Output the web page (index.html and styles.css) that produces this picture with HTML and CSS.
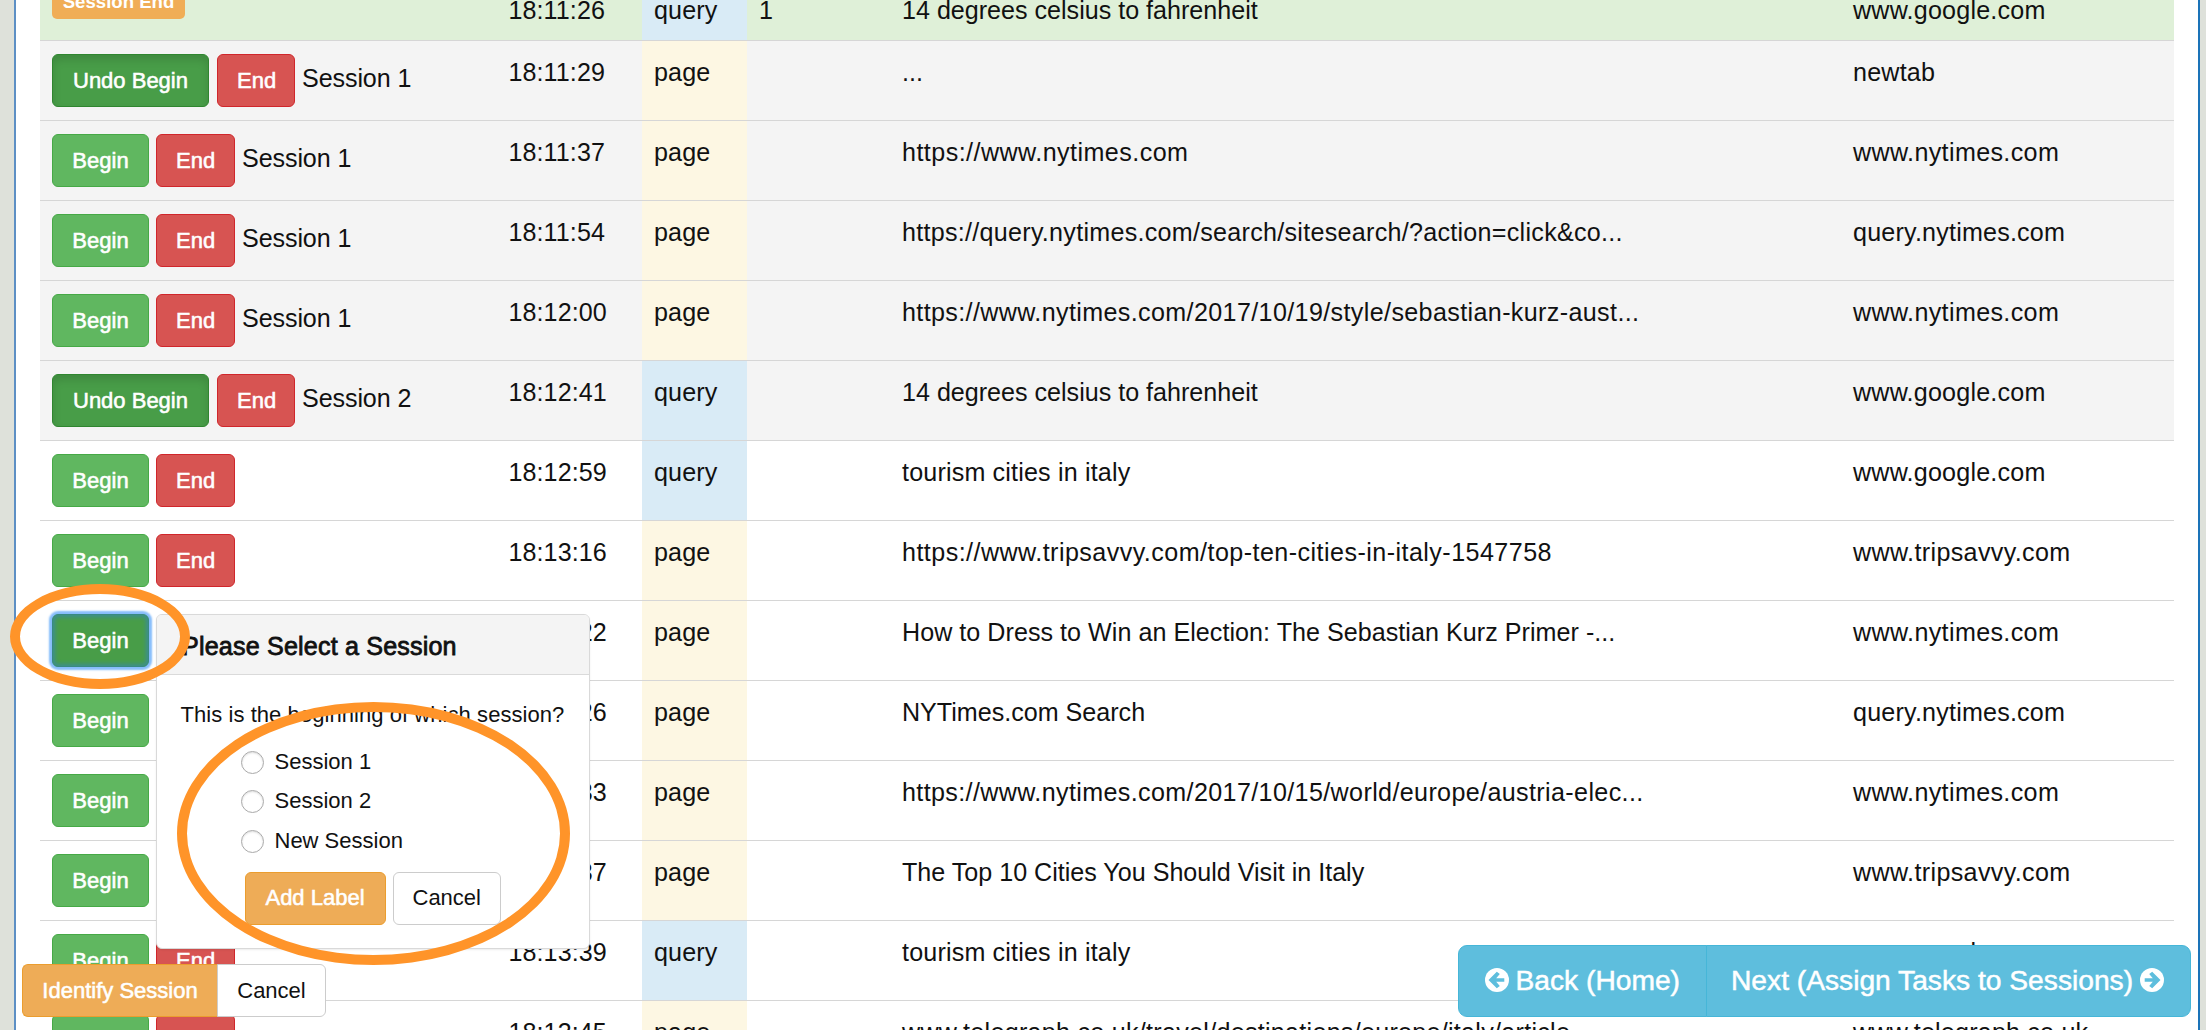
FILE: index.html
```html
<!DOCTYPE html>
<html lang="en">
<head>
<meta charset="utf-8">
<title>Identify Sessions</title>
<link rel="stylesheet" href="styles.css">
</head>
<body>
<main class="frame">
<table class="log">
<colgroup><col class="c-label"><col class="c-time"><col class="c-type"><col class="c-count"><col class="c-title"><col class="c-domain"></colgroup>
<tbody>
<tr class="done"><td class="label-cell"><span class="tag">Session End</span></td><td class="time">18:11:26</td><td class="query">query</td><td>1</td><td>14 degrees celsius to fahrenheit</td><td class="domain">www.google.com</td></tr>
<tr class="labeled"><td class="actions"><div class="row wide"><button class="btn green pressed">Undo Begin</button><button class="btn red">End</button><span>Session 1</span></div></td><td class="time">18:11:29</td><td class="page">page</td><td></td><td>...</td><td class="domain">newtab</td></tr>
<tr class="labeled"><td class="actions"><div class="row"><button class="btn green">Begin</button><button class="btn red">End</button><span>Session 1</span></div></td><td class="time">18:11:37</td><td class="page">page</td><td></td><td class="url-short">https://www.nytimes.com</td><td class="domain loose">www.nytimes.com</td></tr>
<tr class="labeled"><td class="actions"><div class="row"><button class="btn green">Begin</button><button class="btn red">End</button><span>Session 1</span></div></td><td class="time">18:11:54</td><td class="page">page</td><td></td><td class="url-query">https://query.nytimes.com/search/sitesearch/?action=click&amp;co...</td><td class="domain">query.nytimes.com</td></tr>
<tr class="labeled"><td class="actions"><div class="row"><button class="btn green">Begin</button><button class="btn red">End</button><span>Session 1</span></div></td><td class="time">18:12:00</td><td class="page">page</td><td></td><td class="url">https://www.nytimes.com/2017/10/19/style/sebastian-kurz-aust...</td><td class="domain loose">www.nytimes.com</td></tr>
<tr class="labeled"><td class="actions"><div class="row wide"><button class="btn green pressed">Undo Begin</button><button class="btn red">End</button><span>Session 2</span></div></td><td class="time">18:12:41</td><td class="query">query</td><td></td><td>14 degrees celsius to fahrenheit</td><td class="domain">www.google.com</td></tr>
<tr><td class="actions"><div class="row"><button class="btn green">Begin</button><button class="btn red">End</button></div></td><td class="time">18:12:59</td><td class="query">query</td><td></td><td class="search">tourism cities in italy</td><td class="domain">www.google.com</td></tr>
<tr><td class="actions"><div class="row"><button class="btn green">Begin</button><button class="btn red">End</button></div></td><td class="time">18:13:16</td><td class="page">page</td><td></td><td class="url-short">https://www.tripsavvy.com/top-ten-cities-in-italy-1547758</td><td class="domain loose">www.tripsavvy.com</td></tr>
<tr><td class="actions"><div class="row"><button class="btn green focused">Begin</button></div></td><td class="time">18:13:22</td><td class="page">page</td><td></td><td class="headline">How to Dress to Win an Election: The Sebastian Kurz Primer -...</td><td class="domain loose">www.nytimes.com</td></tr>
<tr><td class="actions"><div class="row"><button class="btn green">Begin</button></div></td><td class="time">18:13:26</td><td class="page">page</td><td></td><td>NYTimes.com Search</td><td class="domain">query.nytimes.com</td></tr>
<tr><td class="actions"><div class="row"><button class="btn green">Begin</button></div></td><td class="time">18:13:33</td><td class="page">page</td><td></td><td class="url">https://www.nytimes.com/2017/10/15/world/europe/austria-elec...</td><td class="domain loose">www.nytimes.com</td></tr>
<tr><td class="actions"><div class="row"><button class="btn green">Begin</button></div></td><td class="time">18:13:37</td><td class="page">page</td><td></td><td>The Top 10 Cities You Should Visit in Italy</td><td class="domain loose">www.tripsavvy.com</td></tr>
<tr><td class="actions"><div class="row"><button class="btn green">Begin</button><button class="btn red">End</button></div></td><td class="time">18:13:39</td><td class="query">query</td><td></td><td class="search">tourism cities in italy</td><td class="domain">www.google.com</td></tr>
<tr><td class="actions"><div class="row"><button class="btn green">Begin</button><button class="btn red">End</button></div></td><td class="time">18:13:45</td><td class="page">page</td><td></td><td class="url-query">www.telegraph.co.uk/travel/destinations/europe/italy/article...</td><td class="domain">www.telegraph.co.uk</td></tr>
</tbody>
</table>
</main>

<section class="popover">
  <h3>Please Select a Session</h3>
  <div class="popover-body">
    <p>This is the beginning of which session?</p>
    <div class="choices">
      <label><input type="radio" name="session">Session 1</label>
      <label><input type="radio" name="session">Session 2</label>
      <label><input type="radio" name="session">New Session</label>
    </div>
    <div class="popover-actions"><button class="btn orange">Add Label</button><button class="btn plain">Cancel</button></div>
  </div>
</section>

<div class="dock dock-left"><button class="btn orange">Identify Session</button><button class="btn plain">Cancel</button></div>
<div class="dock dock-right">
  <button class="nav"><svg class="icon" viewBox="0 0 24 24"><circle cx="12" cy="12" r="12"/><path d="M3.5 12 11.8 3.8 14.8 6 11.2 10.2H19.3V13.8H11.2L14.8 18 11.8 20.2Z"/></svg><span>Back (Home)</span></button>
  <button class="nav"><span>Next (Assign Tasks to Sessions)</span><svg class="icon" viewBox="0 0 24 24"><circle cx="12" cy="12" r="12"/><path d="M20.5 12 12.2 3.8 9.2 6 12.8 10.2H4.7V13.8H12.8L9.2 18 12.2 20.2Z"/></svg></button>
</div>
<div class="ring ring-begin"></div>
<div class="ring ring-choices"></div>
</body>
</html>
```
FILE: styles.css
```css
* { box-sizing: border-box; }

body {
  margin: 0;
  height: 1030px;
  overflow: hidden;
  background: #dee1da;
  color: #111;
  font: 25.1px/36px "Liberation Sans", Arial, sans-serif;
}

button { font-family: inherit; margin: 0; }

.frame {
  height: 1030px;
  margin: 0 6px 0 14px;
  padding: 0 24px;
  background: #fff;
  border: solid #5d8fc4;
  border-width: 0 2px;
  border-right-color: #1a73b8;
  overflow: hidden;
}

/* session log */
.log {
  width: 2134px;
  margin-top: -21px;
  table-layout: fixed;
  border-spacing: 0;
}
.c-label { width: 454.5px; }
.c-time { width: 147px; }
.c-type { width: 105.5px; }
.c-count { width: 143px; }
.c-title { width: 950.5px; }
.c-domain { width: 333.5px; }

.log td {
  height: 80px;
  padding: 13px 12px 0;
  border-top: 1px solid #d6d6d6;
  vertical-align: top;
  white-space: nowrap;
}
.log .done td { height: 61px; padding-top: 12px; background: #dff0d8; }
.log .labeled td { background: #f4f4f4; }
.log .query, .log .done .query, .log .labeled .query { background: #d9ebf6; }
.log .page, .log .labeled .page { background: #fdf7e3; }
.log .time { padding-left: 14px; letter-spacing: .08px; }
.log .query, .log .page { letter-spacing: .15px; padding-left: 12.5px; }
.log .domain { padding-left: 12.5px; letter-spacing: .2px; }
.log .loose { letter-spacing: .36px; }
.log .url { letter-spacing: .37px; }
.log .url-short { letter-spacing: .45px; }
.log .url-query { letter-spacing: .28px; }
.log .search { letter-spacing: .17px; }
.log .headline { letter-spacing: .04px; }
.log .actions { padding-top: 13px; }
.log .done .label-cell { padding-top: 11px; line-height: 0; }

.tag {
  display: inline-block;
  width: 133px;
  height: 28px;
  border-radius: 5px;
  background: #f0ad56;
  color: #fff;
  font-size: 18.6px;
  font-weight: bold;
  line-height: 22px;
  text-align: center;
  vertical-align: top;
}

.row { display: flex; gap: 7px; }
.row.wide { gap: 8px; }
.row span { line-height: 48px; letter-spacing: -.1px; }
.row.wide span { margin-left: -1px; }

/* buttons */
.btn {
  height: 53px;
  padding: 0 19px;
  border: 1.5px solid;
  border-radius: 6px;
  color: #fff;
  font-size: 22px;
  line-height: 50px;
  white-space: nowrap;
  -webkit-text-stroke: .55px;
}
.green { width: 97px; background: #60b760; border-color: #46a946; }
.red { width: 79px; background: #d75452; border-color: #d0262b; }
.orange { background: #eeac57; border-color: #eb9d2e; }
.plain { background: #fff; border-color: #ccc; color: #111; -webkit-text-stroke: 0; }
.pressed {
  width: 157px;
  background: #489d48;
  border-color: #2f862f;
  box-shadow: inset 0 5px 8px rgba(0, 0, 0, .125);
}
.wide .red { width: 78px; }
.focused {
  background: #489d48;
  border-color: #398a80;
  box-shadow: 0 0 2px 3px #86bdfb, inset 0 0 4px 2px #3b8d94;
}

/* session picker */
.popover {
  position: absolute;
  left: 156px;
  top: 614px;
  width: 434px;
  height: 335px;
  background: #fff;
  border: 1.5px solid #d9d9d9;
  border-radius: 6px;
  box-shadow: 0 1px 2px rgba(0, 0, 0, .08);
}
.popover h3 {
  height: 60px;
  margin: 0;
  padding: 13px 25px 0;
  background: #f4f4f4;
  border-bottom: 1.5px solid #dadada;
  border-radius: 5px 5px 0 0;
  font-size: 25.1px;
  font-weight: normal;
  line-height: 36px;
  -webkit-text-stroke: .8px;
  letter-spacing: .18px;
}
.popover-body { padding: 24px 23.5px 0; font-size: 22px; line-height: 31px; }
.popover p { margin: 0; white-space: nowrap; letter-spacing: .06px; }
.choices { padding: 12px 0 0 60px; }
.choices label { display: flex; align-items: center; height: 39.3px; gap: 11px; }
.choices input {
  appearance: none;
  width: 23px;
  height: 23px;
  margin: 2px 0 0;
  border: 1.5px solid #aaa;
  border-radius: 50%;
  background: #fff;
  box-shadow: inset 0 1px 2px #ddd;
}
.popover-actions { display: flex; gap: 7px; padding: 12px 0 0 64px; }
.popover-actions .btn { width: 108px; }
.popover-actions .orange { width: 141px; }

/* fixed button groups */
.dock { position: absolute; display: flex; }
.dock-left { left: 22px; top: 964px; }
.dock-left .orange { width: 195px; border-radius: 6px 0 0 6px; border-right: 0; }
.dock-left .plain { width: 109px; border-radius: 0 6px 6px 0; }
.dock-right { left: 1458px; top: 945px; }
.nav {
  display: flex;
  align-items: center;
  gap: 7px;
  width: 249px;
  height: 72px;
  padding: 0 0 2px 25.5px;
  background: #5ebedd;
  border: 1.5px solid #46b6d8;
  border-radius: 9px 0 0 9px;
  color: #fff;
  font-size: 28.2px;
  white-space: nowrap;
  -webkit-text-stroke: .5px;
}
.nav + .nav { width: 485px; margin-left: -1px; border-radius: 0 9px 9px 0; padding-left: 24px; }
.icon { width: 24px; height: 24px; flex: none; stroke: none; -webkit-text-stroke: 0; }
.icon circle { fill: #fff; }
.icon path { fill: #5ebedd; }

/* highlight ellipses */
.ring { position: absolute; border: 10px solid #ff9429; border-radius: 50%; }
.ring-begin { left: 9.5px; top: 584px; width: 180px; height: 105px; }
.ring-choices { left: 177px; top: 702px; width: 393px; height: 263px; }
```
